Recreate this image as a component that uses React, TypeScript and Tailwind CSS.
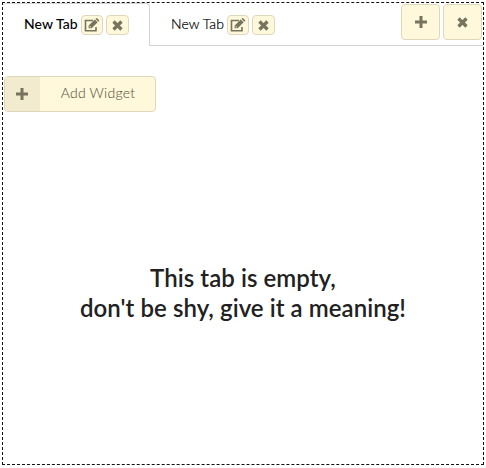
import React from "react";

const EditIcon = () => (
  <svg width="16" height="14" viewBox="0 0 16 14" className="block shrink-0">
    <path d="M9 2.5H1.5V12.7H12V9" fill="none" stroke="#76735f" strokeWidth="1.6" />
    <path d="M4.6 7.4 10.8 1.4 13.7 4.3 7.7 10.2H4.6Z M11.4 .8 12.1.2Q12.6-.2 13.1.2L15 2Q15.4 2.5 15 3L14.3 3.7Z" fill="#76735f" />
    <path d="M5.9 7.9V9.1H7.1" fill="none" stroke="#fff8db" strokeWidth=".6" />
  </svg>
);

const CrossIcon = () => (
  <svg width="11" height="11" viewBox="0 0 11 11" className="block shrink-0">
    <path d="M1.5 1.5 9.5 9.5M9.5 1.5 1.5 9.5" fill="none" stroke="#76735f" strokeWidth="3.3" />
  </svg>
);

const PlusIcon = () => (
  <svg width="12" height="12" viewBox="0 0 12 12" className="block shrink-0">
    <path d="M6 0V12M0 6H12" fill="none" stroke="#76735f" strokeWidth="3" />
  </svg>
);

const button = "flex shrink-0 items-center justify-center border border-[#dfd7bc] bg-[#fff8db]";

const TabActions = () => (
  <>
    <button className={`${button} ml-[3px] h-5 w-[22px] rounded-[4px]`} aria-label="Edit"><EditIcon /></button>
    <button className={`${button} ml-[3px] h-5 w-[23px] rounded-[4px]`} aria-label="Close"><CrossIcon /></button>
  </>
);

export default function App() {
  return (
    <div className="h-[468px] w-[486px] bg-white pl-[2px] pt-[2px] font-['Lato',sans-serif] text-[14px] leading-5 text-[#212121]">
      <main className="flex h-[463px] w-[482px] flex-col border border-dashed border-[#111111]">
        <nav className="flex h-[43px] shrink-0">
          <div className="flex h-[43px] w-[147px] items-start rounded-t-[4px] border-r border-t border-[#d4d4d5] pl-[21px] pt-[10px]">
            <span className="w-[54px] whitespace-nowrap font-['Lato_Medium','Lato',sans-serif] font-medium tracking-[0.05px] text-black">New Tab</span>
            <div className="flex pt-px"><TabActions /></div>
          </div>
          <div className="flex flex-1 items-start border-b border-[#d4d4d5] pl-[21px] pt-[11px]">
            <span className="w-[53px] whitespace-nowrap font-['Lato_Light','Lato',sans-serif] font-light tracking-[0.1px] text-black [-webkit-text-stroke:0.2px_#000]">New Tab</span>
            <div className="flex pt-px"><TabActions /></div>
          </div>
          <div className="flex gap-[3px] border-b border-[#d4d4d5] pr-px pt-px">
            <button className={`${button} h-9 w-[39px] rounded-[4px]`} aria-label="Add tab"><PlusIcon /></button>
            <button className={`${button} h-9 w-[39px] rounded-[4px]`} aria-label="Close all"><CrossIcon /></button>
          </div>
        </nav>
        <button className="ml-px mt-[30px] flex h-9 w-[152px] shrink-0 overflow-hidden rounded-[4px] border border-[#dfd7bc] bg-[#fff8db]">
          <span className="flex h-full w-[35px] items-center justify-center bg-[#f2ebd0] pr-px"><PlusIcon /></span>
          <span className="flex-1 pl-px pt-[6px] text-center font-['Lato_Light','Lato',sans-serif] font-light tracking-[0.25px] text-[#5f5c48] [-webkit-text-stroke:0.1px_#5f5c48]">Add Widget</span>
        </button>
        <h1 className="mt-[151px] text-center font-['Lato_Semibold','Lato',sans-serif] text-[24px] font-semibold leading-[30px] tracking-[0.06px]">
          This tab is empty,<br />don't be shy, give it a meaning!
        </h1>
      </main>
    </div>
  );
}
